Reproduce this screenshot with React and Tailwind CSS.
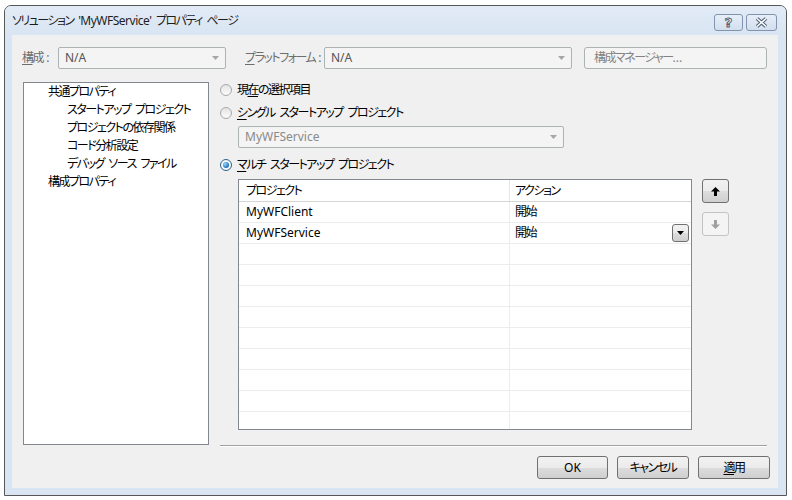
import React from "react";

const btnFace =
  "bg-[linear-gradient(#f2f2f2,#ebebeb_50%,#dddddd_50%,#cfcfcf)] border border-[#707070] rounded-[3px]";

const latin = "tracking-normal";
const sp = "\u2002";

function Combo({ value, width, disabledText }) {
  return (
    <div
      className={`${width} h-[22px] flex items-center justify-between border border-[#adb2b5] rounded-[2px] bg-[#f4f4f4] pl-[6px] pr-[6px]`}
    >
      <span className={`${latin} ${disabledText ? "text-[#8a8a8a]" : "text-[#555]"}`}>{value}</span>
      <svg width="7" height="4" viewBox="0 0 7 4">
        <path d="M0 0H7L3.5 4Z" fill="#a6a6a6" />
      </svg>
    </div>
  );
}

function Radio({ checked, children }) {
  return (
    <div className="h-[18px] flex items-center">
      <span
        className={`w-[12px] h-[12px] rounded-full border flex items-center justify-center ${
          checked
            ? "border-[#2c628b] bg-[#f4f7fb]"
            : "border-[#a8a8a8] bg-[linear-gradient(#e4e4e4,#fbfbfb)]"
        }`}
      >
        {checked && (
          <span className="w-[6px] h-[6px] rounded-full bg-[radial-gradient(circle_at_35%_35%,#9fd9ff,#1b6fb3_70%,#0d4a86)]" />
        )}
      </span>
      <span className="ml-[5px]">{children}</span>
    </div>
  );
}

function Arrow({ up, color }) {
  return (
    <svg width="9" height="9" viewBox="0 0 9 9">
      <path
        d={up ? "M4.5 0L9 4.5H6V9H3V4.5H0Z" : "M4.5 9L9 4.5H6V0H3V4.5H0Z"}
        fill={color}
      />
    </svg>
  );
}

const rows = [
  ["MyWFClient", "開始", false],
  ["MyWFService", "開始", true],
  ["", "", false],
  ["", "", false],
  ["", "", false],
  ["", "", false],
  ["", "", false],
  ["", "", false],
  ["", "", false],
  ["", "", false],
  ["", "", false],
];

export default function App() {
  return (
    <div className="w-[792px] h-[500px] bg-white text-[12px] text-black whitespace-nowrap tracking-[-1.5px] font-['Noto_Sans','Noto_Sans_CJK_JP',sans-serif] [font-feature-settings:'palt'] overflow-hidden">
      <div className="ml-[4px] mt-[5px] w-[783px] h-[491px] border border-[#575757] rounded-t-[7px] bg-[#d9e5f3] flex flex-col">
        {/* title bar */}
        <div className="h-[29px] flex items-center pl-[7px] pr-[9px] bg-[linear-gradient(#e2ebf6,#d9e5f3)] rounded-t-[6px]">
          <span className="flex-1 text-[#1e1e1e] pt-[1px]">
            {`ソリューション${sp}`}
            <span className="tracking-[-0.5px]">'MyWFService'</span>
            {`${sp}プロパティ${sp}ページ`}
          </span>
          <div className="flex gap-[3px] mt-[4px]">
            <div className="w-[29px] h-[17px] rounded-[3px] border border-[#8294ad] bg-[linear-gradient(#e6eef8,#d3dfee)] flex items-center justify-center">
              <span className="font-bold text-[13px] leading-none text-white tracking-normal [-webkit-text-stroke:1px_#4e5e76] font-['DejaVu_Sans',sans-serif]">
                ?
              </span>
            </div>
            <div className="w-[31px] h-[17px] rounded-[3px] border border-[#8294ad] bg-[linear-gradient(#e6eef8,#d3dfee)] flex items-center justify-center">
              <svg width="13" height="11" viewBox="0 0 13 11">
                <path d="M2 1.5L11 9.5M11 1.5L2 9.5" stroke="#4e5e76" strokeWidth="3.6" />
                <path d="M2 1.5L11 9.5M11 1.5L2 9.5" stroke="#ffffff" strokeWidth="1.6" />
              </svg>
            </div>
          </div>
        </div>

        {/* content */}
        <div className="ml-[7px] w-[766px] h-[453px] bg-[#f0f0f0]">
          {/* top row */}
          <div className="flex items-center pt-[12px] pl-[10px]">
            <span className="w-[36px] text-[#6d6d6d]">
              <span className="underline underline-offset-2">構</span>成<span className={latin}> :</span>
            </span>
            <Combo value="N/A" width="w-[168px]" />
            <span className="ml-[19px] w-[79px] text-[#6d6d6d]">
              <span className="underline underline-offset-2">プ</span>ラットフォーム<span className={latin}> :</span>
            </span>
            <Combo value="N/A" width="w-[248px]" />
            <div className="ml-[12px] w-[183px] h-[22px] border border-[#adb2b5] rounded-[3px] bg-[#f4f4f4] flex items-center pl-[9px] text-[#838383]">
              構成マネージャー<span className={latin}>...</span>
            </div>
          </div>

          {/* main area */}
          <div className="flex items-start mt-[12px] pl-[11px]">
            {/* tree */}
            <div className="mt-[1px] w-[186px] h-[363px] bg-white border border-[#828790] pl-[24px] leading-[18px]">
              <div>共通プロパティ</div>
              <div className="pl-[19px]">{`スタートアップ${sp}プロジェクト`}</div>
              <div className="pl-[19px]">プロジェクトの依存関係</div>
              <div className="pl-[19px]">コード分析設定</div>
              <div className="pl-[19px]">{`デバッグ${sp}ソース${sp}ファイル`}</div>
              <div>構成プロパティ</div>
            </div>

            {/* right column */}
            <div className="ml-[11px] w-[547px] flex flex-col">
              <Radio>
                現<span className="underline underline-offset-2">在</span>の選択項目
              </Radio>
              <div className="mt-[5px]">
                <Radio>
                  <span className="underline underline-offset-2">シ</span>
                  {`ングル${sp}スタートアップ${sp}プロジェクト`}
                </Radio>
              </div>
              <div className="mt-[4px] ml-[18px]">
                <Combo value="MyWFService" width="w-[326px]" disabledText />
              </div>
              <div className="mt-[8px]">
                <Radio checked>
                  <span className="underline underline-offset-2">マ</span>
                  {`ルチ${sp}スタートアップ${sp}プロジェクト`}
                </Radio>
              </div>

              <div className="flex items-start mt-[5px]">
                {/* grid */}
                <div className="ml-[18px] w-[454px] h-[251px] border border-[#828790] bg-white overflow-hidden">
                  <div className="flex h-[22px] border-b border-[#d5d5d5] items-center">
                    <div className="w-[271px] h-full flex items-center pl-[7px] border-r border-[#e5e5e5]">
                      プロジェクト
                    </div>
                    <div className="flex-1 pl-[5px]">アクション</div>
                  </div>
                  {rows.map(([name, action, drop], i) => (
                    <div key={i} className="flex h-[21px] border-b border-[#ececec]">
                      <div className={`w-[271px] flex items-center pl-[7px] border-r border-[#ececec] ${latin}`}>
                        {name}
                      </div>
                      <div className="flex-1 flex items-center justify-between pl-[5px] pr-[2px]">
                        <span>{action}</span>
                        {drop && (
                          <div className={`w-[17px] h-[18px] ${btnFace} rounded-[1px] border-[#3c3c3c] flex items-center justify-center`}>
                            <svg width="7" height="4" viewBox="0 0 7 4">
                              <path d="M0 0H7L3.5 4Z" fill="#000" />
                            </svg>
                          </div>
                        )}
                      </div>
                    </div>
                  ))}
                </div>

                {/* up / down */}
                <div className="ml-[10px] flex flex-col">
                  <div className={`w-[27px] h-[24px] ${btnFace} flex items-center justify-center`}>
                    <Arrow up color="#000" />
                  </div>
                  <div className="mt-[9px] w-[27px] h-[24px] border border-[#c4c4c4] rounded-[3px] bg-[#f4f4f4] flex items-center justify-center">
                    <Arrow color="#a0a0a0" />
                  </div>
                </div>
              </div>

              {/* separator */}
              <div className="mt-[15px] h-[2px] border-t border-[#a0a0a0] border-b border-b-white" />

              {/* buttons */}
              <div className="mt-[9px] flex justify-end gap-[9px] mr-[-3px]">
                <div className={`w-[71px] h-[23px] ${btnFace} ${latin} flex items-center justify-center`}>OK</div>
                <div className={`w-[72px] h-[23px] ${btnFace} flex items-center justify-center`}>キャンセル</div>
                <div className={`w-[72px] h-[23px] ${btnFace} flex items-center justify-center`}>
                  <span className="underline underline-offset-2">適</span>用
                </div>
              </div>
            </div>
          </div>
        </div>
      </div>
    </div>
  );
}
